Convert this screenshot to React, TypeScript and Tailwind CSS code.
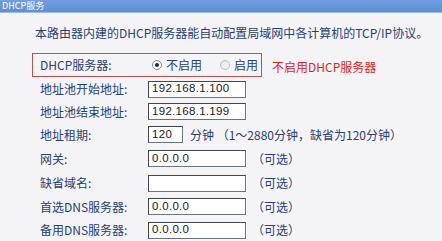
import React from 'react';

const cjk = { fontFamily: '"Noto Sans CJK SC", "Noto Sans", sans-serif' };
const num = { fontFamily: '"Liberation Sans", Arial, sans-serif' };

function Field({ value, w = 'w-[98px]' }: { value?: string; w?: string }) {
  return (
    <div
      className={`${w} h-[17px] bg-white border border-[#6b7280] border-t-[#3f4650] border-l-[#3f4650] flex items-center pl-[3px] text-[11.5px] tracking-[0.3px] text-[#1a1a1a] leading-none`}
      style={num}
    >
      {value}
    </div>
  );
}

const rows = [
  { label: '地址池开始地址:', value: '192.168.1.100', h: 'h-[22px]' },
  { label: '地址池结束地址:', value: '192.168.1.199', h: 'h-[23px]' },
  { label: '地址租期:', value: '120', lease: true, h: 'h-[23px]' },
  { label: '网关:', value: '0.0.0.0', optional: true, h: 'h-[25px]' },
  { label: '缺省域名:', value: '', optional: true, h: 'h-[24px]' },
  { label: '首选DNS服务器:', value: '0.0.0.0', optional: true, h: 'h-[23px]' },
  { label: '备用DNS服务器:', value: '0.0.0.0', optional: true, h: 'h-[24px]' },
];

export default function App() {
  return (
    <div className="w-[442px] h-[241px] overflow-hidden bg-[#f4f4f7] text-[12px] text-[#27406e]" style={cjk}>
      {/* title bar */}
      <div className="h-[13px] flex items-center bg-gradient-to-b from-[#6f9fe0] to-[#5f8ed3] border-b border-[#9cbcea]">
        <span className="pl-[2px] text-white text-[9px] leading-[10px]">DHCP服务</span>
      </div>

      <p className="mt-[12px] ml-[35px] leading-[16px] whitespace-nowrap">
        本路由器内建的DHCP服务器能自动配置局域网中各计算机的TCP/IP协议。
      </p>

      {/* DHCP server switch */}
      <div className="mt-[12px] flex items-start">
        <div className="ml-[32px] w-[230px] h-[24px] border border-[#c0504d] flex items-center">
          <span className="w-[119px] pl-[7px]">DHCP服务器:</span>
          <span className="w-[10px] h-[10px] rounded-full border border-[#7a8796] bg-white flex items-center justify-center">
            <span className="w-[4px] h-[4px] rounded-full bg-[#1f2a3a]" />
          </span>
          <span className="ml-[4px]">不启用</span>
          <span className="ml-[18px] w-[10px] h-[10px] rounded-full border border-[#b8bec6] bg-gradient-to-br from-[#e4e6ea] to-[#f8f8f8]" />
          <span className="ml-[4px]">启用</span>
        </div>
        <span className="ml-[10px] mt-[5px] text-[#e2231a]">不启用DHCP服务器</span>
      </div>

      <div className="mt-[1px]">
        {rows.map((r) => (
          <div key={r.label} className={`${r.h} flex items-center whitespace-nowrap`}>
            <span className="w-[148px] pl-[40px]">{r.label}</span>
            {r.lease ? (
              <>
                <Field value={r.value} w="w-[35px]" />
                <span className="ml-[7px]">分钟 （1～2880分钟，缺省为120分钟）</span>
              </>
            ) : (
              <>
                <Field value={r.value} />
                {r.optional && <span className="ml-[6px]">（可选）</span>}
              </>
            )}
          </div>
        ))}
      </div>
    </div>
  );
}
